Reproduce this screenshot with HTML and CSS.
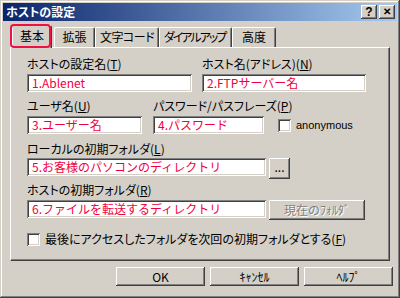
FILE: index.html
```html
<!DOCTYPE html>
<html lang="ja">
<head>
<meta charset="utf-8">
<link rel="stylesheet" href="styles.css">
</head>
<body>
<div class="window">
  <div class="titlebar">
    <span class="title">ホストの設定</span>
    <div class="tb-btns"><span class="tb-btn">?</span><span class="tb-btn tb-x">✕</span></div>
  </div>
  <div class="tabs">
    <div class="tab sel">基本</div>
    <div class="tab t-kaku">拡張</div>
    <div class="tab t-moji">文字コード</div>
    <div class="tab t-dial">ダイアルアップ</div>
    <div class="tab t-kodo">高度</div>
    <div class="highlight"></div>
  </div>
  <div class="panel">
    <div class="row row1">
      <div class="field w165">
        <div class="label">ホストの設定名(<u>T</u>)</div>
        <div class="input">1.Ablenet</div>
      </div>
      <div class="field w164">
        <div class="label">ホスト名(アドレス)(<u>N</u>)</div>
        <div class="input">2.FTPサーバー名</div>
      </div>
    </div>
    <div class="row row2">
      <div class="field w115">
        <div class="label">ユーザ名(<u>U</u>)</div>
        <div class="input">3.ユーザー名</div>
      </div>
      <div class="field w111">
        <div class="label">パスワード/パスフレーズ(<u>P</u>)</div>
        <div class="input">4.パスワード</div>
      </div>
      <div class="check anon"><span class="box"></span><span class="anon-text">anonymous</span></div>
    </div>
    <div class="block block3">
      <div class="label">ローカルの初期フォルダ(<u>L</u>)</div>
      <div class="inrow">
        <div class="input w239">5.お客様のパソコンのディレクトリ</div>
        <div class="btn btn-dots">...</div>
      </div>
    </div>
    <div class="block block4">
      <div class="label">ホストの初期フォルダ(<u>R</u>)</div>
      <div class="inrow">
        <div class="input w239">6.ファイルを転送するディレクトリ</div>
        <div class="btn btn-cur disabled">現在のﾌｫﾙﾀﾞ</div>
      </div>
    </div>
    <div class="check last"><span class="box"></span><span class="label">最後にアクセスしたフォルダを次回の初期フォルダとする(<u>F</u>)</span></div>
  </div>
  <div class="buttons">
    <div class="btn dlg">OK</div>
    <div class="btn dlg">ｷｬﾝｾﾙ</div>
    <div class="btn dlg">ﾍﾙﾌﾟ</div>
  </div>
</div>
</body>
</html>
```

FILE: styles.css
```css
* { box-sizing: border-box; margin: 0; padding: 0; }
html, body { width: 400px; height: 298px; overflow: hidden; }
body {
  font-family: "Noto Sans CJK JP", "Noto Sans", sans-serif;
  font-size: 12px;
  line-height: 14px;
  color: #000;
  background: #d4d0c8;
}
u { text-decoration: underline; text-underline-offset: 1px; }

.window {
  width: 400px;
  height: 298px;
  background: #d4d0c8;
  padding: 3px;
  display: flex;
  flex-direction: column;
  box-shadow: inset -1px -1px #404040, inset 1px 1px #d4d0c8, inset -2px -2px #808080, inset 2px 2px #fff;
}

.titlebar {
  flex: none;
  height: 18px;
  background: linear-gradient(to right, #0a246a, #a6caf0);
  display: flex;
  align-items: center;
  justify-content: space-between;
  padding: 0 2px 0 3px;
}
.title { color: #fff; font-weight: bold; font-size: 12px; font-feature-settings: "palt"; }
.tb-btns { display: flex; gap: 2px; }
.tb-btn {
  width: 16px;
  height: 14px;
  background: #d4d0c8;
  box-shadow: inset -1px -1px #404040, inset 1px 1px #fff, inset -2px -2px #808080;
  font-family: "Liberation Sans", sans-serif;
  font-weight: bold;
  font-size: 12px;
  line-height: 14px;
  text-align: center;
}
.tb-x { font-size: 10px; }

.tabs {
  flex: none;
  position: relative;
  height: 26px;
  margin-left: 9px;
  display: flex;
  align-items: flex-end;
  z-index: 2;
}
.tab {
  height: 20px;
  background: #d4d0c8;
  border-top: 1px solid #fff;
  border-left: 1px solid #fff;
  border-right: 1px solid #404040;
  border-radius: 2px 2px 0 0;
  box-shadow: inset -1px 0 #808080;
  text-align: center;
  line-height: 18px;
  white-space: nowrap;
  overflow: hidden;
  font-feature-settings: "palt";
}
.tab.sel {
  width: 40px;
  height: 23px;
  margin-bottom: -1px;
  line-height: 20px;
}
.t-kaku { width: 41px; margin-left: 2px; }
.t-moji { width: 64px; letter-spacing: -0.5px; }
.t-dial { width: 73px; letter-spacing: -2px; text-indent: -2px; }
.t-kodo { width: 44px; }

.highlight {
  position: absolute;
  left: -2px;
  top: 3px;
  width: 41px;
  height: 24px;
  border: 2px solid #ee1144;
  border-radius: 4px;
}

.panel {
  flex: none;
  margin-left: 7px;
  width: 380px;
  height: 214px;
  border-top: 1px solid #fff;
  border-left: 1px solid #fff;
  border-right: 1px solid #404040;
  border-bottom: 1px solid #404040;
  box-shadow: inset -1px -1px #808080;
  padding: 9px 0 0 16px;
  display: flex;
  flex-direction: column;
}

.row { display: flex; align-items: flex-end; }
.row2 { margin-top: 7px; }
.row1 .field + .field { margin-left: 10px; }
.row2 .field + .field { margin-left: 11px; }

.label { height: 14px; line-height: 14px; white-space: nowrap; font-feature-settings: "palt"; }
.field .label { margin-bottom: 3px; }

.input {
  height: 18px;
  background: #fff;
  color: #f00040;
  padding: 0 5px;
  line-height: 18px;
  white-space: nowrap;
  overflow: hidden;
  box-shadow: inset 1px 1px #808080, inset -1px -1px #fff, inset 2px 2px #404040, inset -2px -2px #d4d0c8;
}
.w165 { width: 165px; }
.w164 { width: 164px; }
.w115 { width: 115px; }
.w111 { width: 111px; }
.w239 { width: 239px; }

.check { display: flex; align-items: center; }
.box {
  flex: none;
  width: 13px;
  height: 13px;
  background: #fff;
  box-shadow: inset 1px 1px #808080, inset -1px -1px #fff, inset 2px 2px #404040, inset -2px -2px #d4d0c8;
}
.anon { margin-left: 14px; margin-bottom: 2px; }
.anon-text {
  margin-left: 5px;
  font-family: "Liberation Sans", sans-serif;
  font-size: 11px;
}

.block3 { margin-top: 8px; }
.block4 { margin-top: 4px; }
.block3 .label { margin-bottom: 2px; }
.block4 .label { margin-bottom: 3px; }
.inrow { display: flex; align-items: flex-start; gap: 3px; }

.btn {
  background: #d4d0c8;
  box-shadow: inset -1px -1px #404040, inset 1px 1px #fff, inset -2px -2px #808080;
  text-align: center;
  white-space: nowrap;
}
.btn-dots { width: 21px; height: 21px; line-height: 18px; }
.btn-cur { width: 96px; height: 20px; line-height: 20px; }
.disabled { color: #808080; text-shadow: 1px 1px #fff; }

.last { margin-top: 12px; }
.last .box { margin-right: 5px; }

.buttons {
  flex: none;
  margin-top: 6px;
  margin-right: 4px;
  display: flex;
  justify-content: flex-end;
  gap: 5px;
}
.dlg { width: 89px; height: 19px; line-height: 19px; }
```
